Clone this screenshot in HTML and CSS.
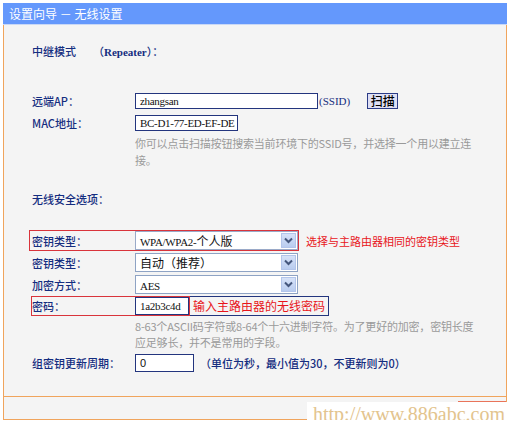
FILE: index.html
```html
<!DOCTYPE html>
<html lang="zh-CN">
<head>
<meta charset="utf-8">
<title>设置向导 - 无线设置</title>
<link rel="stylesheet" href="styles.css">
</head>
<body>
<div class="window">
  <div class="title">设置向导 － 无线设置</div>
  <div class="panel">
    <div class="row mode"><span class="mode-label">中继模式</span><span class="mode-value">（<span class="lat">Repeater</span>）：</span></div>

    <div class="row ap"><span class="label">远端AP：</span><span class="input w-ssid"><span class="mono">zhangsan</span></span><span class="lat ssid">(SSID)</span><span class="btn">扫描</span></div>
    <div class="row mac"><span class="label">MAC地址：</span><span class="input w-mac"><span class="mono">BC-D1-77-ED-EF-DE</span></span></div>
    <div class="help help1">你可以点击扫描按钮搜索当前环境下的SSID号，并选择一个用以建立连<br>接。</div>

    <div class="row sec"><span class="label">无线安全选项：</span></div>

    <div class="row keytype">
      <div class="redbox rb1"><span class="label">密钥类型：</span><span class="select"><span class="sel-text"><span class="mono">WPA/WPA2-</span>个人版</span><span class="arrow"><svg width="9" height="7" viewBox="0 0 9 7"><path d="M1 1.5 L4.5 5 L8 1.5" fill="none" stroke="#44567c" stroke-width="2"/></svg></span></span></div>
      <span class="note-red">选择与主路由器相同的密钥类型</span>
    </div>
    <div class="row auth"><span class="label">密钥类型：</span><span class="select"><span class="sel-text">自动（推荐）</span><span class="arrow"><svg width="9" height="7" viewBox="0 0 9 7"><path d="M1 1.5 L4.5 5 L8 1.5" fill="none" stroke="#44567c" stroke-width="2"/></svg></span></span></div>
    <div class="row enc"><span class="label">加密方式：</span><span class="select"><span class="sel-text"><span class="mono">AES</span></span><span class="arrow"><svg width="9" height="7" viewBox="0 0 9 7"><path d="M1 1.5 L4.5 5 L8 1.5" fill="none" stroke="#44567c" stroke-width="2"/></svg></span></span></div>
    <div class="row pwd">
      <div class="redbox rb2"><span class="label">密码：</span><span class="input w-pwd"><span class="mono">1a2b3c4d</span></span></div>
      <span class="note-box">输入主路由器的无线密码</span>
    </div>
    <div class="help help2">8-63个ASCII码字符或8-64个十六进制字符。为了更好的加密，密钥长度<br>应足够长，并不是常用的字段。</div>

    <div class="row grp"><span class="label">组密钥更新周期：</span><span class="input w-grp"><span class="sans">0</span></span><span class="unit">（单位为秒，最小值为30，不更新则为0）</span></div>
  </div>
  <div class="footer"></div>
  <div class="watermark"><span class="wm-line"></span>http://www.886abc.com</div>
</div>
</body>
</html>
```
FILE: styles.css
```css
html, body {
  margin: 0;
  padding: 0;
  background: #ffffff;
}
body {
  font-family: "Noto Sans CJK SC", "Liberation Sans", sans-serif;
  font-size: 11px;
  color: #142d80;
}
.window {
  position: relative;
  margin: 3px 0 0 3px;
  width: 504px;
}
.title {
  height: 21px;
  line-height: 21px;
  background: #6498fc;
  color: #ffffff;
  font-size: 12px;
  padding-left: 6px;
  border-bottom: 1px solid #c9d8f6;
}
.panel {
  background: #f4f4f4;
  border-left: 1px solid #f0a45c;
  border-right: 1px solid #f0a45c;
  border-bottom: 1px solid #f0a45c;
  padding: 18px 0 24px 28px;
}
.row {
  display: flex;
  align-items: center;
  white-space: nowrap;
}
.label {
  flex: none;
  width: 103px;
  color: #142d80;
  font-weight: 500;
}
.mono {
  font-family: "Liberation Serif", "Times New Roman", serif;
  font-size: 11px;
  letter-spacing: -0.3px;
  color: #111;
}
.sans {
  font-family: "Liberation Sans", sans-serif;
  font-size: 11px;
  color: #111;
}
.lat {
  font-family: "Liberation Serif", "Times New Roman", serif;
  font-size: 11px;
  font-weight: bold;
}
.mode {
  height: 16px;
  font-weight: 500;
}
.mode-label {
  width: 61px;
}
.ap {
  margin-top: 34px;
  height: 16px;
}
.mac {
  margin-top: 6px;
  height: 16px;
}
.input {
  box-sizing: border-box;
  height: 16px;
  background: #ffffff;
  border: 1px solid #23357e;
  display: flex;
  align-items: center;
  padding-left: 4px;
}
.w-ssid { width: 183px; }
.w-mac { width: 103px; }
.w-pwd { width: 54px; height: 18px; }
.w-grp { width: 59px; height: 18px; }
.ssid {
  color: #142d80;
  font-weight: normal;
  margin-left: 1px;
}
.btn {
  box-sizing: border-box;
  margin-left: 17px;
  width: 31px;
  height: 16px;
  line-height: 13px;
  text-align: center;
  background: #dedff4;
  border: 1px solid #2b3b86;
  color: #000;
  font-size: 12px;
  font-weight: 500;
}
.help {
  color: #9a9a9a;
  padding-left: 103px;
  white-space: nowrap;
  letter-spacing: -0.2px;
}
.help1 {
  margin-top: 4px;
  line-height: 17px;
}
.sec {
  margin-top: 22px;
  height: 16px;
}
.redbox {
  display: flex;
  align-items: center;
  border: 1px solid #d9343b;
}
.rb1 {
  margin-left: -3px;
  padding-left: 2px;
  height: 19px;
}
.rb2 {
  margin-left: -1px;
  height: 18px;
}
.keytype {
  margin-top: 23px;
}
.select {
  box-sizing: border-box;
  width: 163px;
  height: 19px;
  background: #ffffff;
  border: 1px solid #8ea3c4;
  display: flex;
  align-items: center;
  justify-content: space-between;
  padding-left: 4px;
  color: #111;
}
.rb1 .select {
  height: 19px;
  border-color: #9aaac8;
}
.sel-text {
  color: #111;
  font-size: 12px;
}
.arrow {
  box-sizing: border-box;
  width: 15px;
  height: 15px;
  margin-right: 1px;
  background: linear-gradient(#d6e2f8, #b9ccef);
  border: 1px solid #b3c5ea;
  display: flex;
  align-items: center;
  justify-content: center;
}
.note-red {
  margin-left: 7px;
  color: #e8141b;
}
.auth {
  margin-top: 2px;
}
.enc {
  margin-top: 3px;
}
.pwd {
  margin-top: 2px;
}
.note-box {
  box-sizing: border-box;
  height: 20px;
  line-height: 18px;
  padding: 0 3px 0 3px;
  border: 1px solid #23357e;
  border-left: none;
  color: #e8141b;
  font-size: 12px;
}
.help2 {
  margin-top: 2px;
  line-height: 16px;
}
.grp {
  margin-top: 4px;
}
.unit {
  margin-left: 6px;
  color: #142d80;
  font-weight: 500;
}
.footer {
  height: 22px;
  background: #f4f4f4;
  border-left: 1px solid #f0a45c;
  border-right: 1px solid #f0a45c;
  border-bottom: 1px solid #f0a45c;
}
.watermark {
  position: absolute;
  left: 304px;
  top: 399px;
  width: 203px;
  height: 25px;
  background: #ffffff;
  color: #e3c48e;
  font-family: "Liberation Serif", serif;
  font-size: 20px;
  line-height: 25px;
  padding-left: 6px;
  box-sizing: border-box;
}
.wm-line {
  position: absolute;
  right: 4px;
  top: -1px;
  width: 48px;
  height: 1px;
  background: #e9745a;
}
```
